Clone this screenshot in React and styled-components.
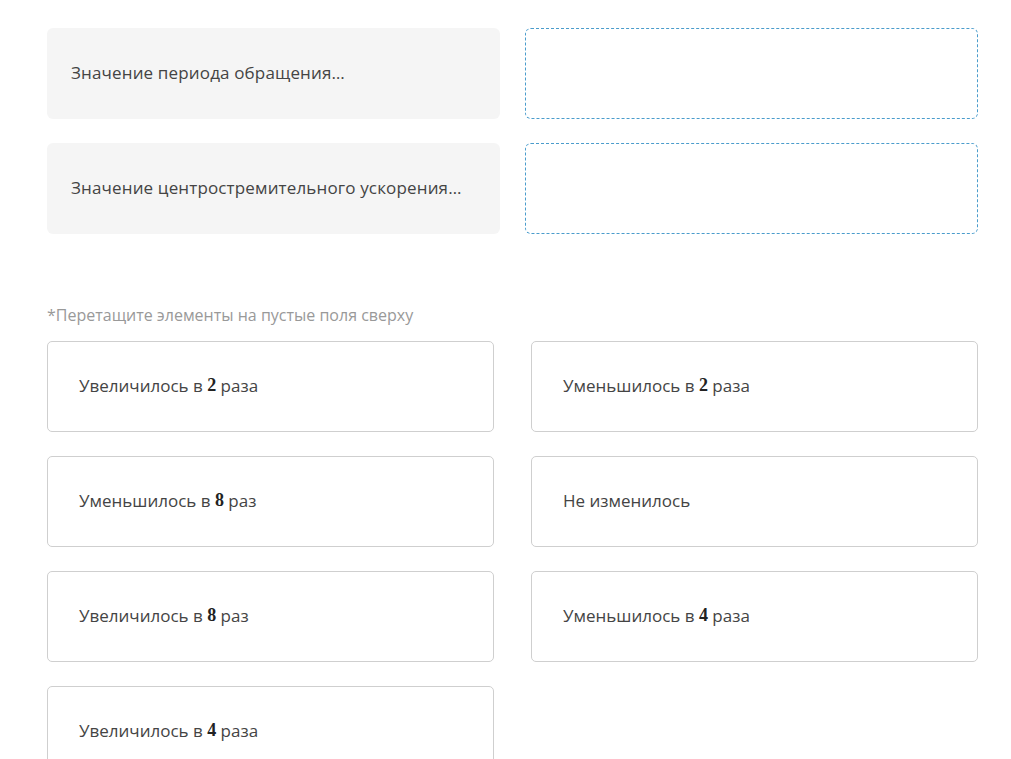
import React from "react";
import styled, { createGlobalStyle } from "styled-components";

const GlobalStyle = createGlobalStyle`
  body {
    margin: 0;
    background: #fff;
    font-family: "Open Sans", "Noto Sans", sans-serif;
    color: #333;
  }
`;

const questions = [
  "Значение периода обращения…",
  "Значение центростремительного ускорения…",
];

const answers = [
  ["Увеличилось в ", "2", " раза"],
  ["Уменьшилось в ", "2", " раза"],
  ["Уменьшилось в ", "8", " раз"],
  ["Не изменилось"],
  ["Увеличилось в ", "8", " раз"],
  ["Уменьшилось в ", "4", " раза"],
  ["Увеличилось в ", "4", " раза"],
];

function App() {
  return (
    <Page>
      <GlobalStyle />
      <Pairs>
        {questions.map((q) => (
          <React.Fragment key={q}>
            <Question>{q}</Question>
            <DropZone />
          </React.Fragment>
        ))}
      </Pairs>

      <Hint>*Перетащите элементы на пустые поля сверху</Hint>

      <Answers>
        {answers.map(([before, num, after]) => (
          <Answer key={before + num + after}>
            {before}
            {num && <Num>{num}</Num>}
            {after}
          </Answer>
        ))}
      </Answers>
    </Page>
  );
}

const Page = styled.div`
  width: 931px;
  padding: 28px 0 40px 47px;
`;

const Pairs = styled.div`
  display: grid;
  grid-template-columns: 453px 453px;
  column-gap: 25px;
  row-gap: 24px;
`;

const Question = styled.div`
  height: 91px;
  display: flex;
  align-items: center;
  padding: 0 24px 3px;
  box-sizing: border-box;
  background: #f5f5f5;
  border-radius: 6px;
  font-size: 17px;
  letter-spacing: 0.15px;
  color: #444;
`;

const DropZone = styled.div`
  height: 91px;
  box-sizing: border-box;
  border: 1px dashed #4a9ccc;
  border-radius: 6px;
`;

const Hint = styled.div`
  margin-top: 70px;
  font-size: 16px;
  line-height: 22px;
  color: #999;
`;

const Answers = styled.div`
  margin-top: 15px;
  display: grid;
  grid-template-columns: 447px 447px;
  column-gap: 37px;
  row-gap: 24px;
`;

const Answer = styled.div`
  height: 91px;
  box-sizing: border-box;
  display: flex;
  align-items: center;
  white-space: pre;
  padding: 0 31px 2px;
  border: 1px solid #cfcfcf;
  border-radius: 5px;
  font-size: 17px;
  color: #444;
`;

const Num = styled.span`
  font-family: "Liberation Serif", "DejaVu Serif", serif;
  font-weight: bold;
  font-size: 18px;
  color: #222;
`;

export default App;
